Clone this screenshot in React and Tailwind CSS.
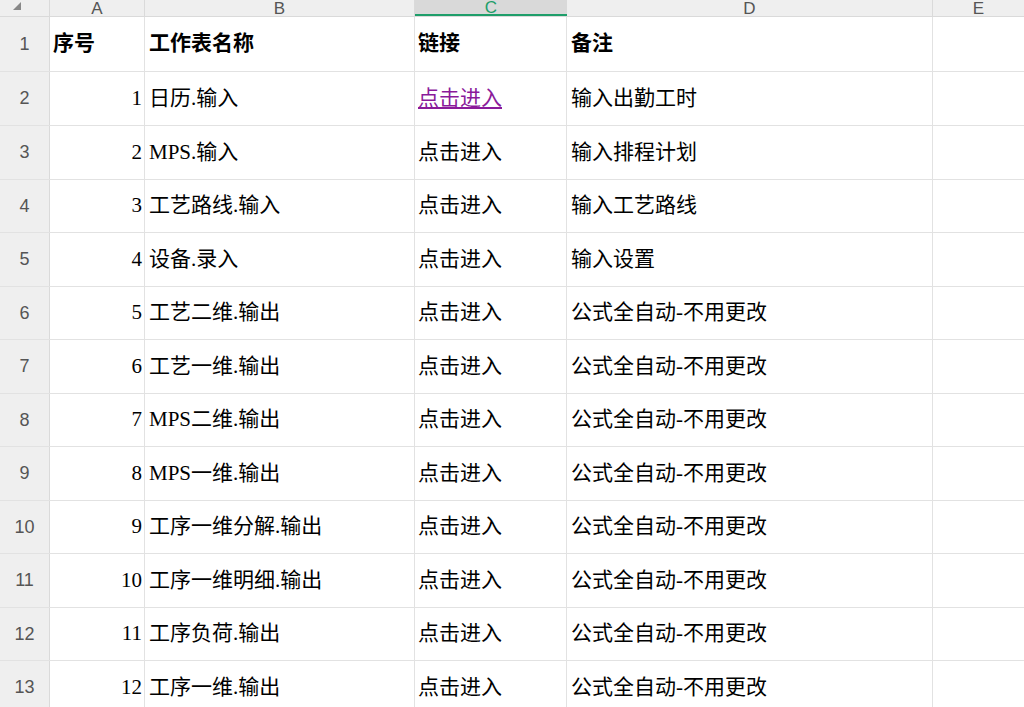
export default function App() {
  const rows = [
    ["序号", "工作表名称", "链接", "备注"],
    ["1", "日历.输入", "点击进入", "输入出勤工时"],
    ["2", "MPS.输入", "点击进入", "输入排程计划"],
    ["3", "工艺路线.输入", "点击进入", "输入工艺路线"],
    ["4", "设备.录入", "点击进入", "输入设置"],
    ["5", "工艺二维.输出", "点击进入", "公式全自动-不用更改"],
    ["6", "工艺一维.输出", "点击进入", "公式全自动-不用更改"],
    ["7", "MPS二维.输出", "点击进入", "公式全自动-不用更改"],
    ["8", "MPS一维.输出", "点击进入", "公式全自动-不用更改"],
    ["9", "工序一维分解.输出", "点击进入", "公式全自动-不用更改"],
    ["10", "工序一维明细.输出", "点击进入", "公式全自动-不用更改"],
    ["11", "工序负荷.输出", "点击进入", "公式全自动-不用更改"],
    ["12", "工序一维.输出", "点击进入", "公式全自动-不用更改"],
  ];
  const heights = [55, 54, 54, 53, 54, 53, 54, 53, 54, 53, 54, 53, 54];
  const font = { fontFamily: '"Liberation Serif", "Noto Sans CJK SC", serif' };
  const hdrFont = { fontFamily: '"Liberation Sans", "Noto Sans", sans-serif' };
  return (
    <div className="w-[1024px] h-[707px] overflow-hidden bg-white" style={font}>
      <div className="flex h-[17px] bg-[#efefef] text-[#555] text-[17px] border-b border-[#dadada]" style={hdrFont}>
        <div className="w-[50px] shrink-0 border-r border-[#dadada] relative">
          <div className="absolute right-[28px] top-[2px] w-0 h-0 border-l-[8px] border-l-transparent border-b-[8px] border-b-[#888]" />
        </div>
        <div className="w-[95px] shrink-0 border-r border-[#dadada] flex justify-center items-center leading-none">A</div>
        <div className="w-[270px] shrink-0 border-r border-[#dadada] flex justify-center items-center leading-none">B</div>
        <div className="w-[152px] shrink-0 bg-[#d9d9d9] border-b-2 border-[#1e9e6a] text-[#1e9e6a] flex justify-center items-center leading-none">C</div>
        <div className="w-[366px] shrink-0 border-r border-[#dadada] flex justify-center items-center leading-none">D</div>
        <div className="flex-1 flex justify-center items-center leading-none">E</div>
      </div>
      {rows.map((r, i) => (
        <div key={i} className="flex border-b border-[#e2e2e2]" style={{ height: heights[i] }}>
          <div className="w-[50px] shrink-0 bg-[#efefef] border-r border-[#dadada] flex items-center justify-center text-[#555] text-[18px]" style={hdrFont}>{i + 1}</div>
          <div className={`w-[95px] shrink-0 border-r border-[#e2e2e2] flex items-center text-[21px] text-black ${i === 0 ? "justify-start pl-[3px] font-bold" : "justify-end pr-[2px]"}`}>{r[0]}</div>
          <div className={`w-[270px] shrink-0 border-r border-[#e2e2e2] flex items-center pl-[4px] text-[21px] text-black ${i === 0 ? "font-bold" : ""}`}>{r[1]}</div>
          <div className={`w-[152px] shrink-0 border-r border-[#e2e2e2] flex items-center pl-[3px] text-[21px] ${i === 0 ? "font-bold text-black" : i === 1 ? "text-[#8a1a9a] underline" : "text-black"}`}>{r[2]}</div>
          <div className={`w-[366px] shrink-0 border-r border-[#e2e2e2] flex items-center pl-[4px] text-[21px] text-black ${i === 0 ? "font-bold" : ""}`}>{r[3]}</div>
          <div className="flex-1" />
        </div>
      ))}
    </div>
  );
}
